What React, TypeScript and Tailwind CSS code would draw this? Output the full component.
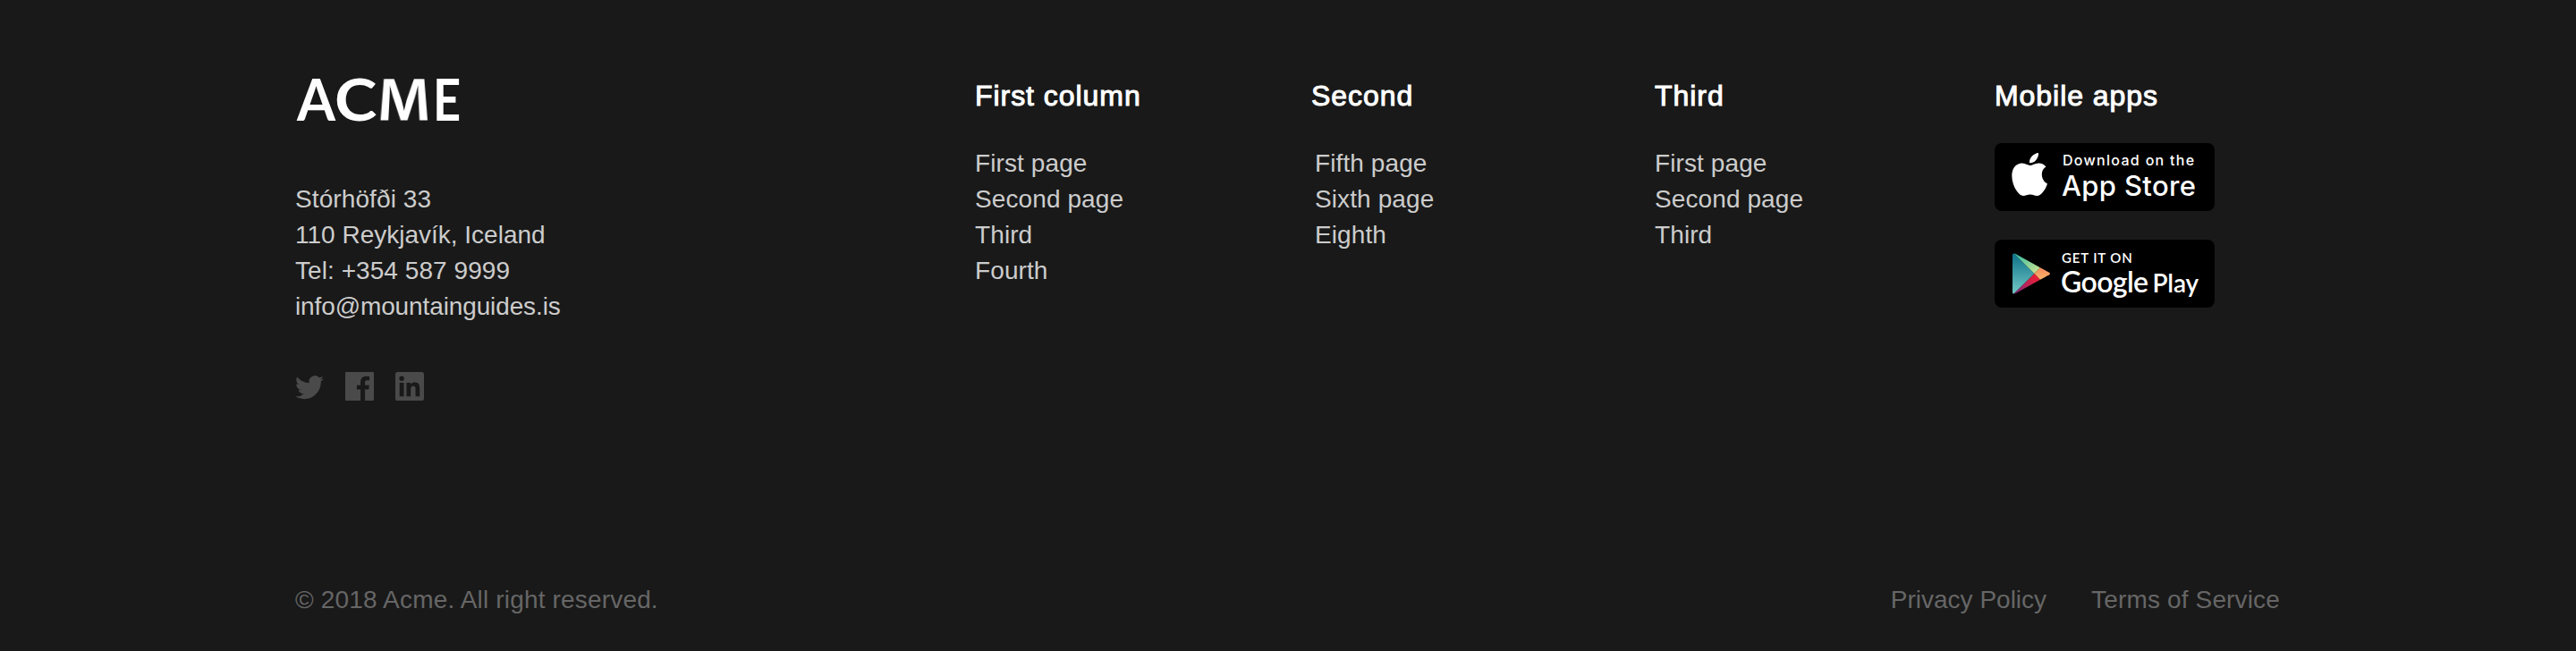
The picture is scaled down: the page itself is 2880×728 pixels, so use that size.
import React from "react";

const columns = [
  { title: "First column", titleX: "ml-0", links: ["First page", "Second page", "Third", "Fourth"] },
  { title: "Second", titleX: "-ml-1", links: ["Fifth page", "Sixth page", "Eighth"] },
  { title: "Third", titleX: "ml-0", links: ["First page", "Second page", "Third"] },
];

const headingStyle = "text-[32px] leading-10 tracking-[0.95px] text-white [-webkit-text-stroke:1px_white]";

function TwitterIcon() {
  return (
    <svg className="h-8 w-8" viewBox="0 0 24 24" fill="currentColor">
      <path d="M23.95 4.57a10 10 0 0 1-2.82.77 4.96 4.96 0 0 0 2.16-2.72c-.95.55-2 .96-3.13 1.18a4.92 4.92 0 0 0-8.38 4.48A13.93 13.93 0 0 1 1.64 3.16 4.92 4.92 0 0 0 3.2 9.72a4.9 4.9 0 0 1-2.23-.61v.06a4.92 4.92 0 0 0 3.95 4.83 5 5 0 0 1-2.21.08 4.94 4.94 0 0 0 4.6 3.42A9.87 9.87 0 0 1 0 19.54a13.99 13.99 0 0 0 7.56 2.21c9.05 0 14-7.5 14-13.98 0-.21 0-.42-.02-.63a9.94 9.94 0 0 0 2.46-2.55z" transform="translate(0 .9)" />
    </svg>
  );
}

function FacebookIcon() {
  return (
    <svg className="h-8 w-8" viewBox="0 0 24 24" fill="currentColor">
      <path d="M23.3 0H.7C.3 0 0 .3 0 .7v22.600c0 .4.3.7.7.7H12.8v-9.290H9.690v-3.630h3.110V8.410c0-3.100 1.900-4.790 4.670-4.790 1.330 0 2.460.1 2.800.15v3.240h-1.920c-1.500 0-1.800.72-1.800 1.770v2.300h3.600l-.47 3.630h-3.130V24h6.750c.4 0 .7-.3.7-.7V.7c0-.4-.3-.7-.7-.7z" />
    </svg>
  );
}

function LinkedinIcon() {
  return (
    <svg className="h-8 w-8" viewBox="0 0 24 24" fill="currentColor" fillRule="evenodd">
      <path d="M1.8 0h20.4C23.2 0 24 .8 24 1.75v20.5c0 .95-.8 1.75-1.8 1.75H1.8C.8 24 0 23.2 0 22.25V1.75C0 .8.8 0 1.8 0zM3.55 9v11.45h3.57V9zM5.34 3.3a2.07 2.07 0 1 0 0 4.14 2.07 2.07 0 0 0 0-4.14zM9.35 9v11.45h3.56V14.8c0-1.5.3-2.95 2.15-2.95s1.85 1.7 1.85 3.05v5.55h3.54v-6.29c0-3.08-.66-5.45-4.27-5.45-1.73 0-2.9.95-3.37 1.85h-.05V9z" />
    </svg>
  );
}

function AppleIcon() {
  return (
    <svg className="h-[49px] w-10" viewBox="0 0 40 49" fill="#fff">
      <path d="M30 1C30.400 4 29 6.900 27.300 9C25.400 11.200 22.600 12.500 20 12.300C19.700 9.400 21 6.600 22.700 4.800C24.600 2.700 27.600 1.100 30 1Z" />
      <path d="M38.400 16.600C35.500 18.300 33.800 21.500 33.800 25C33.800 29.500 36.400 33.800 40 35.500C39 38.800 37.300 42 35 44.800C33 47.400 31 49 28.400 49C25.500 49 24.300 47.400 20.800 47.400C17.200 47.400 15.800 49 13 49C10.300 49 8 46.800 5.900 43.800C2.400 39 .3 32.500 .3 26.500C.3 17.500 5.800 12.600 11.800 12.600C15.400 12.600 18.200 15 20.600 15C22.900 15 26.200 12.400 30.300 12.400C33.500 12.400 36.500 13.800 38.400 16.600Z" />
    </svg>
  );
}

function PlayIcon() {
  return (
    <svg className="h-[46px] w-[42px]" viewBox="0 0 42 46">
      <defs>
        <linearGradient id="play-blue" x1="0" y1="0" x2="0" y2="1">
          <stop offset="0" stopColor="#0d7189" />
          <stop offset="1" stopColor="#72c8c4" />
        </linearGradient>
        <linearGradient id="play-green" x1="0" y1="0" x2="1" y2="1">
          <stop offset="0" stopColor="#2bb9a4" />
          <stop offset="1" stopColor="#d6e58e" />
        </linearGradient>
        <linearGradient id="play-red" x1="1" y1="0" x2="0" y2="1">
          <stop offset="0.2" stopColor="#e51f38" />
          <stop offset="1" stopColor="#7a2c83" />
        </linearGradient>
        <linearGradient id="play-orange" x1="0" y1="0" x2="0" y2="1">
          <stop offset="0" stopColor="#f58b5b" />
          <stop offset="1" stopColor="#fcb56c" />
        </linearGradient>
      </defs>
      <path d="M1.500.5 24.500 23 1.500 45.500Q0 45.500 0 44V2Q0 .5 1.500.5z" fill="url(#play-blue)" />
      <path d="M1.500.5Q2.500.3 4 1.200L31 16.200 24.500 23z" fill="url(#play-green)" />
      <path d="M1.500 45.500Q2.500 45.700 4 44.800L31 29.800 24.500 23z" fill="url(#play-red)" />
      <path d="M31 16.200 41 21.800Q43 23 41 24.200L31 29.800 24.500 23z" fill="url(#play-orange)" />
    </svg>
  );
}

export default function App() {
  return (
    <footer className="flex h-[728px] w-[2880px] flex-col bg-[#191919] pl-[330px] font-['Liberation_Sans',sans-serif] text-[28px] leading-10 text-[#cccccc]">
      <div className="flex h-[651px] pt-[87px]">
        <div className="w-[760px]">
          <div className="flex h-[50px] items-baseline pl-[1.8px] font-['Lato',sans-serif] text-[64.5px] leading-[46px] font-bold text-white">
            <span className="w-[42.2px] origin-left scale-x-96">A</span>
            <span className="w-[48.5px] origin-left scale-x-111">C</span>
            <span className="w-[61.5px] font-['Inter',sans-serif] font-semibold [transform-origin:30px_50%] [transform:translateY(-1.8px)_perspective(100px)_rotateX(18deg)_scale(0.97,1.03)]">
              M
            </span>
            <span className="w-[38px] origin-left scale-x-84">E</span>
          </div>
          <address className="mt-[66px] flex flex-col not-italic">
            <span className="tracking-[0.1px]">Stórhöfði 33</span>
            <span>110 Reykjavík, Iceland</span>
            <span className="tracking-[0.06px]">Tel: +354 587 9999</span>
            <span className="tracking-[-0.12px]">info@mountainguides.is</span>
          </address>
          <div className="mt-[53px] flex gap-6 text-[#4a4a4a]">
            <TwitterIcon />
            <FacebookIcon />
            <LinkedinIcon />
          </div>
        </div>
        {columns.map((column) => (
          <nav key={column.title} className="w-[380px]">
            <h2 className={`${column.titleX} ${headingStyle}`}>{column.title}</h2>
            <ul className="mt-9 tracking-[0.1px]">
              {column.links.map((link) => (
                <li key={link}>{link}</li>
              ))}
            </ul>
          </nav>
        ))}
        <div>
          <h2 className={headingStyle}>Mobile apps</h2>
          <div className="mt-[33px] flex flex-col gap-8">
            <a className="flex h-[76px] w-[246px] rounded-lg bg-black pt-[10px] pl-[19px] text-white">
              <AppleIcon />
              <span className="-mt-px ml-4 flex flex-col font-['Inter',sans-serif] font-medium whitespace-nowrap">
                <span className="pl-px text-[16px] leading-5 tracking-[1.3px]">Download on the</span>
                <span className="mt-px text-[31px] leading-9 tracking-[0.35px]">App Store</span>
              </span>
            </a>
            <a className="flex h-[76px] w-[246px] rounded-lg bg-black pt-[15px] pl-5 text-white">
              <PlayIcon />
              <span className="-mt-px ml-3 flex flex-col font-['Lato',sans-serif] font-semibold whitespace-nowrap">
                <span className="pl-px text-[15px] leading-3 tracking-[0.85px]">GET IT ON</span>
                <span className="mt-[3px] flex items-baseline gap-[5px] leading-9">
                  <span className="text-[32px] tracking-[-0.6px]">Google</span>
                  <span className="text-[28px] tracking-[-0.2px]">Play</span>
                </span>
              </span>
            </a>
          </div>
        </div>
      </div>
      <div className="flex h-[69px] w-[2220px] justify-between text-[#666666]">
        <span className="tracking-[0.17px]">© 2018 Acme. All right reserved.</span>
        <div className="flex gap-[50px] pr-px">
          <span>Privacy Policy</span>
          <span className="tracking-[0.15px]">Terms of Service</span>
        </div>
      </div>
    </footer>
  );
}
